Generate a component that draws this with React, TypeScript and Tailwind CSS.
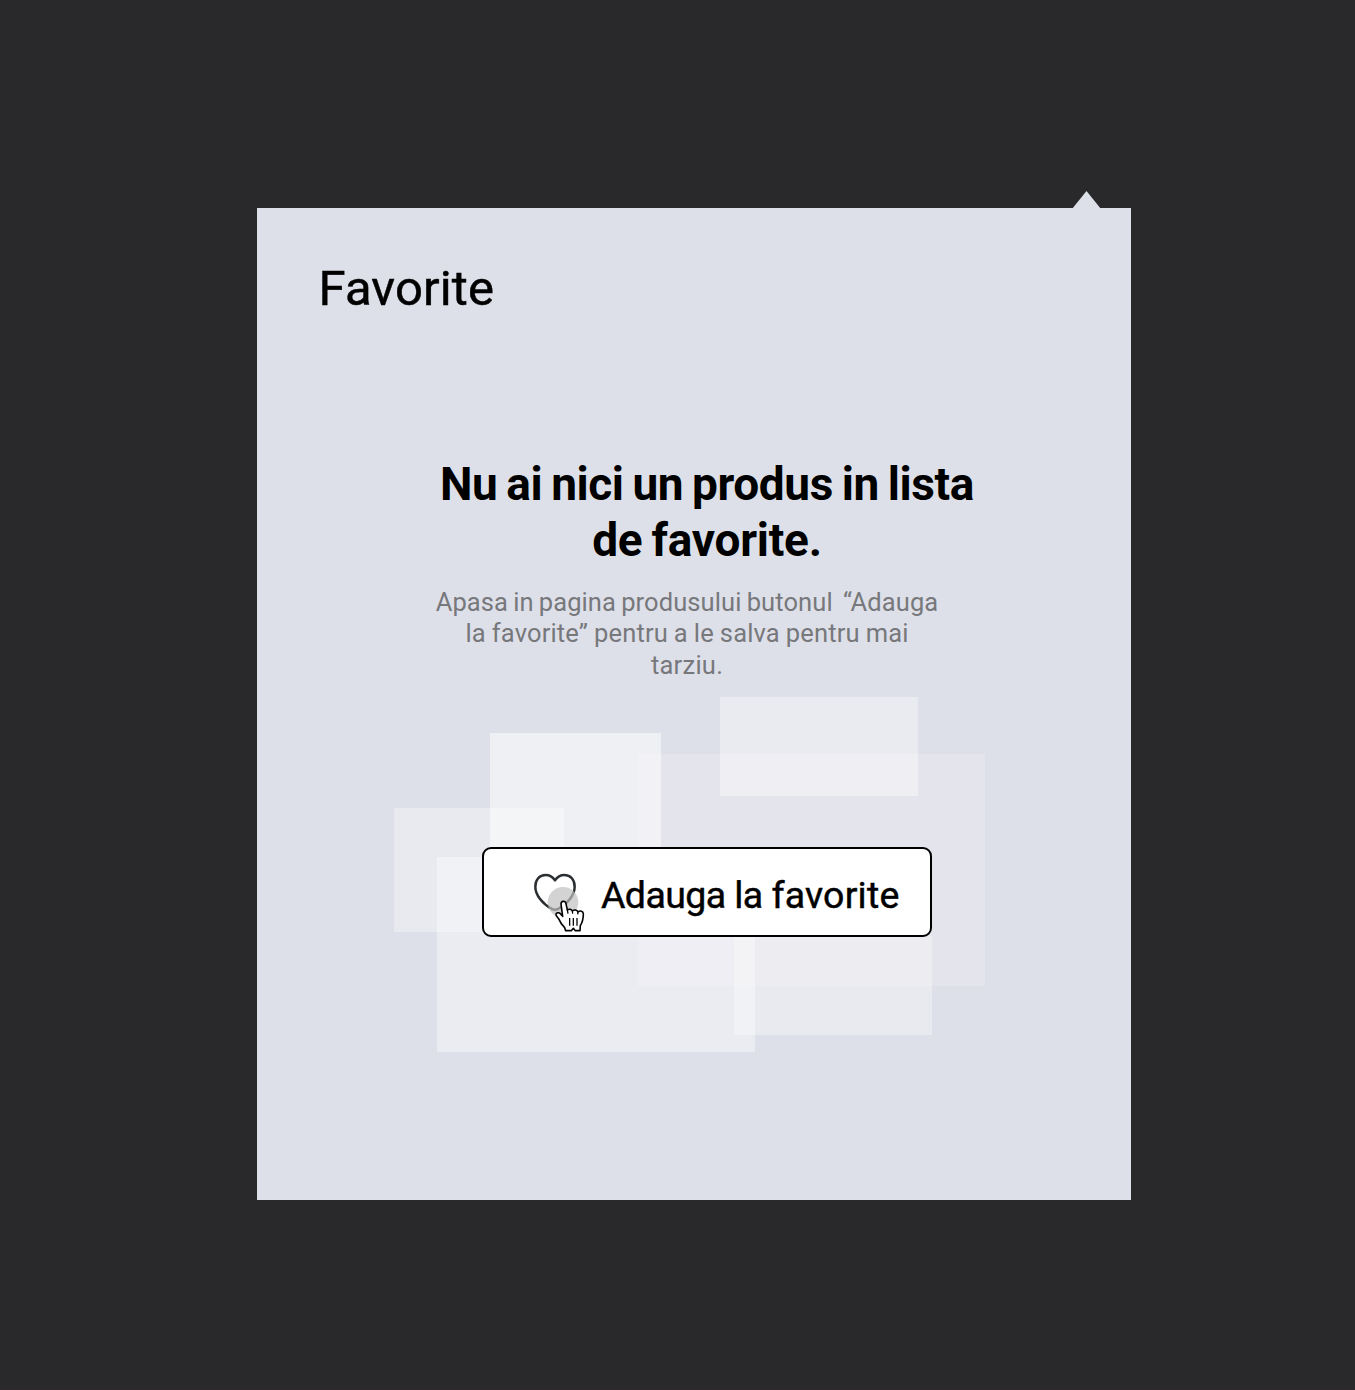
function HeartWithCursor() {
  return (
    <svg className="mt-4 h-20 w-20 shrink-0" viewBox="0 0 240 240" fill="none" aria-hidden="true">
      <path
        d="M105 61C97 49 87 45 77 45C58 45 46 59 46 80C46 105 67 131 96 147Q105 151 114 147C143 131 164 105 164 80C164 59 152 45 133 45C123 45 113 49 105 61Z"
        stroke="#2b2f31"
        strokeWidth="7.5"
        strokeLinejoin="round"
      />
      <circle cx="129" cy="127" r="46" fill="#c0c0c0" fillOpacity="0.7" />
      <path
        d="M123 132C123 122 136 121 138 131L142 150C147 146 154 147 157 153C163 148 171 149 174 156C181 150 190 154 190 162C190 174 188 186 181 197L180 212H166L160 205L154 212H137L134 203C127 196 121 188 117 178C114 173 110 170 108 165C107 158 116 156 121 161L128 169Z"
        fill="#fff"
        stroke="#000"
        strokeWidth="4.8"
        strokeLinejoin="round"
      />
      <path d="M142 149L144 161M157 153L158 161M174 156L173 163M149 174V197M160 174V197M171 174V197" stroke="#000" strokeWidth="3.8" />
    </svg>
  );
}

function Backdrop() {
  return (
    <div className="absolute inset-0" aria-hidden="true">
      <div className="absolute left-[244px] top-[57px] h-[232px] w-[347px] bg-[#f6f0fc]/26" />
      <div className="absolute left-0 top-[111px] h-[124px] w-[170px] bg-[#fbfbf8]/40" />
      <div className="absolute left-[96px] top-[36px] h-[124px] w-[171px] bg-white/50" />
      <div className="absolute left-[326px] top-0 h-[99px] w-[198px] bg-[#fdfdfd]/40" />
      <div className="absolute left-[43px] top-[160px] h-[195px] w-[318px] bg-[#fdfdfe]/42" />
      <div className="absolute left-[340px] top-[239px] h-[99px] w-[198px] bg-[#fdfcfa]/36" />
    </div>
  );
}

export default function App() {
  return (
    <main className="flex h-[1390px] w-full overflow-hidden border-b-2 border-[#2e292b] bg-[#29292b] font-['Roboto',sans-serif]">
      <section className="relative ml-[257px] mt-[208px] flex h-[992px] w-[873.5px] flex-col bg-[#dee0e9]">
        <svg className="absolute -top-[17px] left-[815px] h-[18px] w-[29px]" viewBox="0 0 29 18" aria-hidden="true">
          <path d="M14.5 0L29 18H0Z" fill="#dee0e9" />
        </svg>
        <h1 className="ml-[61.5px] mt-[51px] h-[60px] whitespace-nowrap text-[49px] leading-[60px] tracking-[0.15px] text-black [-webkit-text-stroke:0.5px_#000]">Favorite</h1>
        <h2 className="ml-[183px] mt-[137px] w-[534px] whitespace-nowrap text-center text-[46px] font-bold leading-[56px] text-black">
          <span className="tracking-[-0.4px] [word-spacing:-2.2px]">Nu ai nici un produs in lista</span>
          <br />
          <span className="tracking-[-0.25px] [word-spacing:-2px]">de favorite.</span>
        </h2>
        <p className="ml-[173px] mt-[18.5px] h-[95px] w-[514px] whitespace-pre text-center text-[25.5px] leading-[31.5px] text-[#77787b]">
          <span className="tracking-[0.1px] [word-spacing:-1.3px]">{'Apasa in pagina produsului butonul  “Adauga'}</span>
          <br />
          <span className="tracking-[0.15px] [word-spacing:-0.5px]">la favorite” pentru a le salva pentru mai</span>
          <br />
          <span className="tracking-[0.25px]">tarziu.</span>
        </p>
        <div className="relative ml-[137px] mt-[15.5px] h-[355px] w-[591px]">
          <Backdrop />
          <button className="relative ml-[88px] mt-[150px] flex h-[90px] w-[449.5px] items-center rounded-[9px] border-2 border-black bg-white pl-[36px] text-black">
            <HeartWithCursor />
            <span className="ml-[1px] mt-[5px] whitespace-nowrap text-[37.5px] leading-[46px] [-webkit-text-stroke:0.45px_#000]">
              <span className="tracking-[-0.6px] [word-spacing:0.1px]">Adauga la </span>
              <span className="tracking-[0.2px]">favorite</span>
            </span>
          </button>
        </div>
      </section>
    </main>
  );
}
